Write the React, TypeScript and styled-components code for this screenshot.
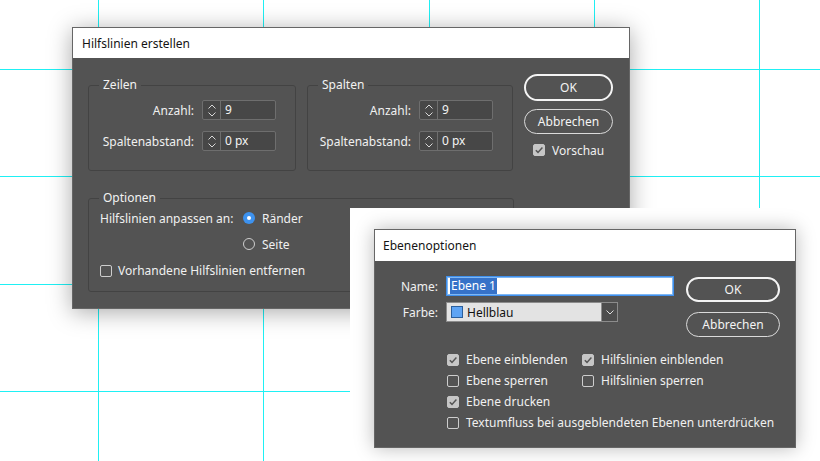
import React from "react";
import styled, { createGlobalStyle, css } from "styled-components";

const Global = createGlobalStyle`
  html, body { margin: 0; padding: 0; background: #fff; }
  body { font-family: "Noto Sans", "Segoe UI", sans-serif; overflow: hidden; }
  * { box-sizing: border-box; }
`;

const Desktop = styled.div`
  position: relative;
  width: 820px;
  height: 461px;
  overflow: hidden;
  background: #fff;
`;

const GuideLayer = styled.svg`
  position: absolute;
  left: 0;
  top: 0;
`;

const Window = styled.section<{ $x: number; $y: number; $w: number; $h: number }>`
  position: absolute;
  left: ${(p) => p.$x}px;
  top: ${(p) => p.$y}px;
  width: ${(p) => p.$w}px;
  height: ${(p) => p.$h}px;
  border: 1px solid #666;
  background: #535353;
  box-shadow: 0 3px 22px rgba(0, 0, 0, 0.34);
  display: flex;
  flex-direction: column;
  color: #f0f0f0;
  font-size: 12px;
`;

const Backdrop = styled.div`
  position: absolute;
  left: 350px;
  top: 208px;
  width: 470px;
  height: 253px;
  background: #fff;
  padding: 21px 0 0 24px;
`;

const FloatingDialog = styled.section`
  width: 422px;
  height: 219px;
  border: 1px solid #666;
  background: #535353;
  box-shadow: 0 0 18px rgba(0, 0, 0, 0.28);
  display: flex;
  flex-direction: column;
  color: #f0f0f0;
  font-size: 12px;
`;

const TitleBar = styled.header<{ $h: number; $pad: number }>`
  flex: none;
  height: ${(p) => p.$h}px;
  background: #fff;
  color: #141414;
  font-size: 12px;
  display: flex;
  align-items: center;
  padding-left: ${(p) => p.$pad}px;
`;

/* ---------- dialog 1 ---------- */

const GuidesBody = styled.div`
  flex: 1;
  display: flex;
  flex-direction: column;
  gap: 19px;
  padding: 19px 15px 15px 15px;
`;

const TopRow = styled.div`
  display: flex;
  align-items: flex-start;
`;

const Group = styled.fieldset<{ $w: number; $gapAfter?: number }>`
  margin: 0 ${(p) => p.$gapAfter ?? 0}px 0 0;
  padding: 0;
  width: ${(p) => p.$w}px;
  min-inline-size: 0;
  border: 1px solid #434343;
  border-radius: 3px;
`;

const GroupTitle = styled.legend`
  margin-left: 10px;
  padding: 0 4px;
  font-size: 12px;
  line-height: 16px;
  color: #f2f2f2;
`;

const FieldGrid = styled.div`
  display: grid;
  grid-template-columns: 1fr 74px;
  grid-auto-rows: 20px;
  column-gap: 8px;
  row-gap: 11px;
  align-items: center;
  padding: 7px 19px 19px 0;
`;

const FieldLabel = styled.span<{ $left?: boolean }>`
  text-align: ${(p) => (p.$left ? "left" : "right")};
  white-space: nowrap;
  color: #f0f0f0;
`;

const Spinner = styled.div`
  height: 20px;
  display: flex;
  border: 1px solid #6e6e6e;
  border-radius: 2px;
  background: #474747;
`;

const SpinArrows = styled.div`
  width: 18px;
  flex: none;
  border-right: 1px solid #6e6e6e;
  display: flex;
  flex-direction: column;
  align-items: center;
  justify-content: center;
  gap: 3px;
`;

const SpinValue = styled.span`
  padding-left: 4px;
  line-height: 18px;
  color: #f4f4f4;
`;

const ButtonColumn = styled.div<{ $w: number; $gap: number; $top: number; $left: number }>`
  flex: none;
  width: ${(p) => p.$w}px;
  margin-left: ${(p) => p.$left}px;
  margin-top: ${(p) => p.$top}px;
  display: flex;
  flex-direction: column;
  gap: ${(p) => p.$gap}px;
`;

const PillButton = styled.button<{ $primary?: boolean; $h: number }>`
  height: ${(p) => p.$h}px;
  border-radius: 999px;
  background: transparent;
  color: #f4f4f4;
  font-family: inherit;
  font-size: 12px;
  padding: 0;
  ${(p) =>
    p.$primary
      ? css`
          border: 2px solid #f4f4f4;
        `
      : css`
          border: 1px solid #dadada;
        `}
`;

const CheckRow = styled.label<{ $indent?: number; $gap?: number }>`
  display: flex;
  align-items: center;
  gap: ${(p) => p.$gap ?? 7}px;
  margin-left: ${(p) => p.$indent ?? 0}px;
  height: 16px;
  white-space: nowrap;
  color: #f0f0f0;
`;

const Box = styled.span<{ $on?: boolean }>`
  flex: none;
  width: 12px;
  height: 12px;
  border-radius: 2px;
  display: flex;
  align-items: center;
  justify-content: center;
  border: 1px solid ${(p) => (p.$on ? "#c6c6c6" : "#cdcdcd")};
  background: ${(p) => (p.$on ? "#c6c6c6" : "transparent")};
`;

const RadioDot = styled.span<{ $on?: boolean }>`
  flex: none;
  width: 12px;
  height: 12px;
  border-radius: 50%;
  display: flex;
  align-items: center;
  justify-content: center;
  ${(p) =>
    p.$on
      ? css`
          background: #3d92ef;
          &::after {
            content: "";
            width: 4px;
            height: 4px;
            border-radius: 50%;
            background: #fff;
          }
        `
      : css`
          border: 1px solid #cdcdcd;
        `}
`;

const OptionsGrid = styled.div`
  display: grid;
  grid-template-columns: 143px auto;
  grid-template-rows: 16px 16px 16px;
  row-gap: 10px;
  align-items: center;
  padding: 4px 11px 13px 11px;
`;

const WideCell = styled.div`
  grid-column: 1 / -1;
  margin-top: 1px;
`;

const StackedCell = styled.div`
  grid-column: 2;
`;

/* ---------- dialog 2 ---------- */

const LayerBody = styled.div`
  flex: 1;
  display: flex;
  align-items: flex-start;
  padding: 15px 14px 14px 13px;
`;

const LayerForm = styled.div`
  flex: none;
  width: 286px;
  display: flex;
  flex-direction: column;
`;

const FormGrid = styled.div`
  display: grid;
  grid-template-columns: 50px auto;
  grid-auto-rows: 20px;
  column-gap: 8px;
  row-gap: 6px;
  align-items: center;
`;

const NameInput = styled.div`
  width: 228px;
  height: 20px;
  background: #fff;
  border: 1px solid #3f90ee;
  box-shadow: inset 0 0 0 1px #7fb7f3;
  display: flex;
  align-items: center;
  padding-left: 3px;
`;

const Selected = styled.span`
  background: #3672c8;
  color: #fff;
  line-height: 16px;
  padding: 0 1px;
`;

const ColorSelect = styled.div`
  width: 172px;
  height: 20px;
  display: flex;
  align-items: center;
  background: #e3e3e3;
  border: 1px solid #8c8c8c;
  color: #111;
`;

const Swatch = styled.span`
  width: 12px;
  height: 12px;
  margin: 0 4px 0 4px;
  background: #5ea4f4;
  border: 1px solid #2b5f9c;
`;

const SelectText = styled.span`
  flex: 1;
`;

const SelectArrow = styled.span`
  width: 16px;
  height: 18px;
  background: #4d4d4d;
  border-left: 1px solid #8c8c8c;
  display: flex;
  align-items: center;
  justify-content: center;
`;

const CheckGrid = styled.div`
  display: grid;
  grid-template-columns: 135px auto;
  grid-auto-rows: 21px;
  align-items: center;
  margin: 27px 0 0 59px;
`;

const SpanAll = styled.div`
  grid-column: 1 / -1;
`;

/* ---------- icons ---------- */

const Chevron = ({ up, color = "#d8d8d8" }: { up?: boolean; color?: string }) => (
  <svg width="8" height="5" viewBox="0 0 8 5">
    <path
      d={up ? "M0.5 4.5 L4 1 L7.5 4.5" : "M0.5 0.5 L4 4 L7.5 0.5"}
      fill="none"
      stroke={color}
      strokeWidth="1"
    />
  </svg>
);

const Tick = () => (
  <svg width="10" height="10" viewBox="0 0 10 10">
    <path d="M1.8 5.2 L4 7.4 L8.4 2.6" fill="none" stroke="#555" strokeWidth="1.5" />
  </svg>
);

const Check = ({
  on,
  children,
  indent,
  gap,
}: {
  on?: boolean;
  children: React.ReactNode;
  indent?: number;
  gap?: number;
}) => (
  <CheckRow $indent={indent} $gap={gap}>
    <Box $on={on}>{on && <Tick />}</Box>
    <span>{children}</span>
  </CheckRow>
);

const Radio = ({ on, children }: { on?: boolean; children: React.ReactNode }) => (
  <CheckRow>
    <RadioDot $on={on} />
    <span>{children}</span>
  </CheckRow>
);

const NumberField = ({ value }: { value: string }) => (
  <Spinner>
    <SpinArrows>
      <Chevron up />
      <Chevron />
    </SpinArrows>
    <SpinValue>{value}</SpinValue>
  </Spinner>
);

const Guides = () => {
  const xs = [98.5, 263.5, 429.5, 594.5, 759.5];
  const ys = [69.5, 176.5, 284.5, 391.5];
  return (
    <GuideLayer width="820" height="461" viewBox="0 0 820 461">
      {xs.map((x) => (
        <line key={"x" + x} x1={x} y1={0} x2={x} y2={461} stroke="#1ff0f4" strokeWidth="1" />
      ))}
      {ys.map((y) => (
        <line key={"y" + y} x1={0} y1={y} x2={820} y2={y} stroke="#1ff0f4" strokeWidth="1" />
      ))}
    </GuideLayer>
  );
};

export default function App() {
  return (
    <>
      <Global />
      <Desktop>
        <Guides />

        <Window $x={72} $y={27} $w={558} $h={282}>
          <TitleBar $h={30} $pad={9}>Hilfslinien erstellen</TitleBar>
          <GuidesBody>
            <TopRow>
              <Group $w={208} $gapAfter={11}>
                <GroupTitle>Zeilen</GroupTitle>
                <FieldGrid>
                  <FieldLabel>Anzahl:</FieldLabel>
                  <NumberField value="9" />
                  <FieldLabel>Spaltenabstand:</FieldLabel>
                  <NumberField value="0 px" />
                </FieldGrid>
              </Group>
              <Group $w={206}>
                <GroupTitle>Spalten</GroupTitle>
                <FieldGrid>
                  <FieldLabel>Anzahl:</FieldLabel>
                  <NumberField value="9" />
                  <FieldLabel>Spaltenabstand:</FieldLabel>
                  <NumberField value="0 px" />
                </FieldGrid>
              </Group>
              <ButtonColumn $w={89} $gap={8} $top={-3} $left={11}>
                <PillButton $primary $h={27}>OK</PillButton>
                <PillButton $h={25}>Abbrechen</PillButton>
                <Check on indent={9}>
                  Vorschau
                </Check>
              </ButtonColumn>
            </TopRow>

            <Group $w={426}>
              <GroupTitle>Optionen</GroupTitle>
              <OptionsGrid>
                <FieldLabel $left>Hilfslinien anpassen an:</FieldLabel>
                <Radio on>Ränder</Radio>
                <StackedCell>
                  <Radio>Seite</Radio>
                </StackedCell>
                <WideCell>
                  <Check gap={6}>Vorhandene Hilfslinien entfernen</Check>
                </WideCell>
              </OptionsGrid>
            </Group>
          </GuidesBody>
        </Window>

        <Backdrop>
          <FloatingDialog>
            <TitleBar $h={31} $pad={8}>Ebenenoptionen</TitleBar>
            <LayerBody>
              <LayerForm>
                <FormGrid>
                  <FieldLabel>Name:</FieldLabel>
                  <NameInput>
                    <Selected>Ebene 1</Selected>
                  </NameInput>
                  <FieldLabel>Farbe:</FieldLabel>
                  <ColorSelect>
                    <Swatch />
                    <SelectText>Hellblau</SelectText>
                    <SelectArrow>
                      <Chevron color="#dcdcdc" />
                    </SelectArrow>
                  </ColorSelect>
                </FormGrid>
                <CheckGrid>
                  <Check on>Ebene einblenden</Check>
                  <Check on>Hilfslinien einblenden</Check>
                  <Check>Ebene sperren</Check>
                  <Check>Hilfslinien sperren</Check>
                  <SpanAll>
                    <Check on>Ebene drucken</Check>
                  </SpanAll>
                  <SpanAll>
                    <Check>Textumfluss bei ausgeblendeten Ebenen unterdrücken</Check>
                  </SpanAll>
                </CheckGrid>
              </LayerForm>
              <ButtonColumn $w={94} $gap={10} $top={1} $left={12}>
                <PillButton $primary $h={25}>OK</PillButton>
                <PillButton $h={25}>Abbrechen</PillButton>
              </ButtonColumn>
            </LayerBody>
          </FloatingDialog>
        </Backdrop>
      </Desktop>
    </>
  );
}
